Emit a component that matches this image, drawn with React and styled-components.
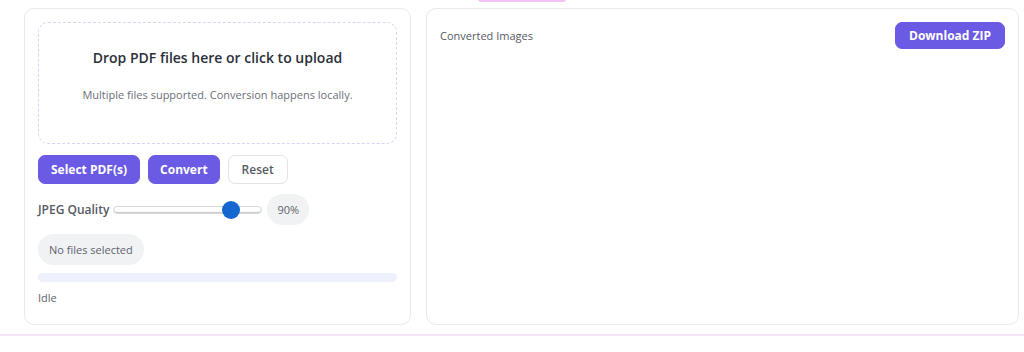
import React, { useState } from 'react'
import styled, { createGlobalStyle } from 'styled-components'

const GlobalStyle = createGlobalStyle`
  html, body {
    margin: 0;
    padding: 0;
    background: #ffffff;
    font-family: "Open Sans", "Noto Sans", "Liberation Sans", sans-serif;
  }
  * { box-sizing: border-box; }
`

const Page = styled.div`
  width: 1024px;
  height: 352px;
  display: flex;
  flex-direction: column;
`

const TopStrip = styled.div`
  height: 8px;
  display: flex;
  padding-left: 478px;
`

const Glow = styled.div`
  width: 88px;
  height: 3px;
  margin-top: -1px;
  border-radius: 0 0 8px 8px;
  background: #f2c2f4;
`

const Main = styled.main`
  display: grid;
  grid-template-columns: 387px 593px;
  gap: 15px;
  padding-left: 24px;
  height: 317px;
`

const Card = styled.section`
  background: #fff;
  border: 1px solid #e9e9ee;
  border-radius: 10px;
  padding: 13px;
  display: flex;
  flex-direction: column;
`

const Dropzone = styled.div`
  height: 122px;
  border: 1px dashed #d9d3f8;
  border-radius: 10px;
  display: flex;
  flex-direction: column;
  align-items: center;
  justify-content: center;
  gap: 20px;
  padding-bottom: 16px;
  cursor: pointer;
`

const DropTitle = styled.div`
  font-size: 14px;
  font-weight: 600;
  color: #2b2f3a;
`

const DropHint = styled.div`
  font-size: 11px;
  color: #6b6f78;
`

const Actions = styled.div`
  display: flex;
  gap: 8px;
  margin-top: 11px;
`

const Button = styled.button`
  height: ${p => p.$h || '29px'};
  padding: 0 ${p => p.$px || '12px'};
  border-radius: 7px;
  font-family: inherit;
  font-size: 12px;
  cursor: pointer;
  border: 1px solid ${p => (p.$ghost ? '#e3e3e8' : '#6b5ae3')};
  background: ${p => (p.$ghost ? '#fff' : '#6b5ae3')};
  color: ${p => (p.$ghost ? '#555a63' : '#fff')};
  font-weight: ${p => (p.$ghost ? 600 : 700)};
`

const QualityRow = styled.div`
  display: flex;
  align-items: center;
  margin-top: 10px;
  gap: 5px;
`

const Label = styled.label`
  font-size: 12px;
  font-weight: 600;
  color: #565a63;
  margin-right: -1px;
`

const Slider = styled.input`
  -webkit-appearance: none;
  appearance: none;
  width: 149px;
  height: 8px;
  margin: 0;
  border-radius: 4px;
  background: #fff;
  border: 1px solid #d8d8dc;
  box-shadow: inset 0 -1px 1px #c8c8cc;
  outline: none;
  &::-webkit-slider-thumb {
    -webkit-appearance: none;
    width: 18px;
    height: 18px;
    border-radius: 50%;
    background: #1467d1;
    border: none;
  }
`

const Pill = styled.div`
  height: 31px;
  display: inline-flex;
  align-items: center;
  padding: 0 ${p => p.$px || '11px'};
  margin-top: ${p => p.$mt || '0'};
  border-radius: 16px;
  background: #f1f2f4;
  color: #5f636b;
  font-size: 11px;
  align-self: flex-start;
`

const Progress = styled.div`
  height: 9px;
  border-radius: 5px;
  background: #eef0fb;
  margin-top: 8px;
  overflow: hidden;
`

const Status = styled.div`
  font-size: 11px;
  color: #5f636b;
  margin-top: 8px;
`

const Header = styled.div`
  display: flex;
  justify-content: space-between;
  align-items: center;
`

const Heading = styled.div`
  font-size: 11px;
  color: #565a63;
`

const BottomLine = styled.div`
  height: 2px;
  margin-top: 9px;
  background: #f4e1f7;
`

export default function App() {
  const [quality, setQuality] = useState(90)

  return (
    <Page>
      <GlobalStyle />
      <TopStrip>
        <Glow />
      </TopStrip>
      <Main>
        <Card>
          <Dropzone>
            <DropTitle>Drop PDF files here or click to upload</DropTitle>
            <DropHint>Multiple files supported. Conversion happens locally.</DropHint>
          </Dropzone>
          <Actions>
            <Button>Select PDF(s)</Button>
            <Button $px="11px">Convert</Button>
            <Button $ghost $px="13px">Reset</Button>
          </Actions>
          <QualityRow>
            <Label>JPEG Quality</Label>
            <Slider
              type="range"
              min="40"
              max="100"
              value={quality}
              onChange={e => setQuality(Number(e.target.value))}
            />
            <Pill $px="10px">{quality}%</Pill>
          </QualityRow>
          <Pill $mt="9px">No files selected</Pill>
          <Progress />
          <Status>Idle</Status>
        </Card>
        <Card>
          <Header>
            <Heading>Converted Images</Heading>
            <Button $px="13px" $h="27px">Download ZIP</Button>
          </Header>
        </Card>
      </Main>
      <BottomLine />
    </Page>
  )
}
